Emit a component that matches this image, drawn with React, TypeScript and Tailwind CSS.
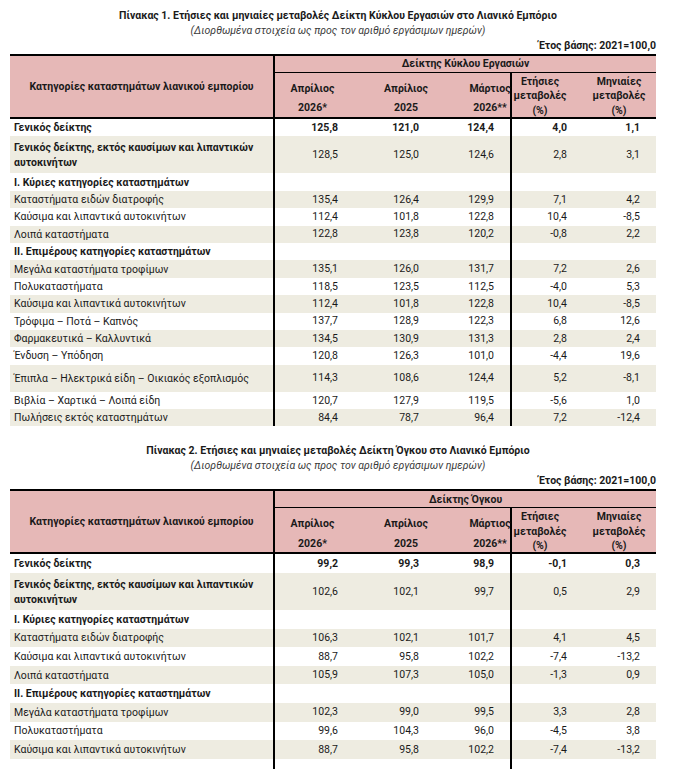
import React from 'react';

type Row = {
  label: string;
  v: string[];
  kind?: 'bold' | 'boldLabel' | 'section';
  size?: 'double' | 'tall' | 'empty';
};

const table1: Row[] = [
  { label: 'Γενικός δείκτης', v: ['125,8', '121,0', '124,4', '4,0', '1,1'], kind: 'bold' },
  { label: 'Γενικός δείκτης, εκτός καυσίμων και λιπαντικών αυτοκινήτων', v: ['128,5', '125,0', '124,6', '2,8', '3,1'], kind: 'boldLabel', size: 'double' },
  { label: 'I. Κύριες κατηγορίες καταστημάτων', v: ['', '', '', '', ''], kind: 'section' },
  { label: 'Καταστήματα ειδών διατροφής', v: ['135,4', '126,4', '129,9', '7,1', '4,2'] },
  { label: 'Καύσιμα και λιπαντικά αυτοκινήτων', v: ['112,4', '101,8', '122,8', '10,4', '-8,5'] },
  { label: 'Λοιπά καταστήματα', v: ['122,8', '123,8', '120,2', '-0,8', '2,2'] },
  { label: 'II. Επιμέρους κατηγορίες καταστημάτων', v: ['', '', '', '', ''], kind: 'section' },
  { label: 'Μεγάλα καταστήματα τροφίμων', v: ['135,1', '126,0', '131,7', '7,2', '2,6'] },
  { label: 'Πολυκαταστήματα', v: ['118,5', '123,5', '112,5', '-4,0', '5,3'] },
  { label: 'Καύσιμα και λιπαντικά αυτοκινήτων', v: ['112,4', '101,8', '122,8', '10,4', '-8,5'] },
  { label: 'Τρόφιμα – Ποτά – Καπνός', v: ['137,7', '128,9', '122,3', '6,8', '12,6'] },
  { label: 'Φαρμακευτικά – Καλλυντικά', v: ['134,5', '130,9', '131,3', '2,8', '2,4'] },
  { label: 'Ένδυση – Υπόδηση', v: ['120,8', '126,3', '101,0', '-4,4', '19,6'] },
  { label: 'Έπιπλα – Ηλεκτρικά είδη – Οικιακός εξοπλισμός', v: ['114,3', '108,6', '124,4', '5,2', '-8,1'], size: 'tall' },
  { label: 'Βιβλία – Χαρτικά – Λοιπά είδη', v: ['120,7', '127,9', '119,5', '-5,6', '1,0'] },
  { label: 'Πωλήσεις εκτός καταστημάτων', v: ['84,4', '78,7', '96,4', '7,2', '-12,4'] },
];

const table2: Row[] = [
  { label: 'Γενικός δείκτης', v: ['99,2', '99,3', '98,9', '-0,1', '0,3'], kind: 'bold' },
  { label: 'Γενικός δείκτης, εκτός καυσίμων και λιπαντικών αυτοκινήτων', v: ['102,6', '102,1', '99,7', '0,5', '2,9'], kind: 'boldLabel', size: 'double' },
  { label: 'I. Κύριες κατηγορίες καταστημάτων', v: ['', '', '', '', ''], kind: 'section' },
  { label: 'Καταστήματα ειδών διατροφής', v: ['106,3', '102,1', '101,7', '4,1', '4,5'] },
  { label: 'Καύσιμα και λιπαντικά αυτοκινήτων', v: ['88,7', '95,8', '102,2', '-7,4', '-13,2'] },
  { label: 'Λοιπά καταστήματα', v: ['105,9', '107,3', '105,0', '-1,3', '0,9'] },
  { label: 'II. Επιμέρους κατηγορίες καταστημάτων', v: ['', '', '', '', ''], kind: 'section' },
  { label: 'Μεγάλα καταστήματα τροφίμων', v: ['102,3', '99,0', '99,5', '3,3', '2,8'] },
  { label: 'Πολυκαταστήματα', v: ['99,6', '104,3', '96,0', '-4,5', '3,8'] },
  { label: 'Καύσιμα και λιπαντικά αυτοκινήτων', v: ['88,7', '95,8', '102,2', '-7,4', '-13,2'] },
  { label: '', v: ['', '', '', '', ''], size: 'empty' },
];

const cols = 'grid grid-cols-[265px_75px_112px_50px_70px_74px]';
const numPad = ['pr-[12px]', 'pr-[43px]', 'pr-[16px] border-r-2 border-black', 'pr-[15px]', 'pr-[16px]'];

function Header({ name }: { name: string }) {
  return (
    <div className={`${cols} bg-[#e6b8b7] border-t-2 border-b-2 border-black font-bold`}>
      <div className="row-span-2 border-r-2 border-black flex items-center justify-center">
        Κατηγορίες καταστημάτων λιανικού εμπορίου
      </div>
      <div className="col-span-5 h-[17px] border-b border-black flex items-center justify-center">{name}</div>
      <div className="h-[44px] flex flex-col items-center justify-between pt-[8px] pb-[1px]">
        <span>Απρίλιος</span>
        <span>2026*</span>
      </div>
      <div className="h-[44px] flex flex-col items-center justify-between pt-[8px] pb-[1px]">
        <span>Απρίλιος</span>
        <span>2025</span>
      </div>
      <div className="h-[44px] flex flex-col items-center justify-between pt-[8px] pb-[1px] pl-[8px] border-r-2 border-black">
        <span>Μάρτιος</span>
        <span>2026**</span>
      </div>
      <div className="h-[44px] flex flex-col items-center justify-center pt-[3px] pr-[14px] leading-[14.5px]">
        <span>Ετήσιες</span>
        <span>μεταβολές</span>
        <span>(%)</span>
      </div>
      <div className="h-[44px] flex flex-col items-center justify-center pt-[3px] leading-[14.5px]">
        <span>Μηνιαίες</span>
        <span>μεταβολές</span>
        <span>(%)</span>
      </div>
    </div>
  );
}

function Table({ title, sub, name, rows, rowH }: { title: string; sub: string; name: string; rows: Row[]; rowH: string }) {
  return (
    <div>
      <div className="w-[676px] text-center font-bold leading-[15px]">{title}</div>
      <div className="w-[676px] text-center italic text-[#3a3a3a] leading-[15px]">{sub}</div>
      <div className="ml-[10px] w-[646px] text-right font-bold leading-[15px] mb-[1px]">Έτος βάσης: 2021=100,0</div>
      <div className="ml-[10px] w-[646px]">
        <Header name={name} />
        {rows.map((r, i) => {
          const h = r.size === 'double' ? 'h-[37px]' : r.size === 'tall' ? 'h-[27px]' : rowH;
          const bg = i % 2 === 1 ? 'bg-[#eeece1]' : 'bg-white';
          const labelBold = r.kind ? 'font-bold' : '';
          const valBold = r.kind === 'bold' ? 'font-bold' : '';
          return (
            <div key={i} className={`${cols} ${bg} ${h}`}>
              <div className={`border-r-2 border-black pl-[4px] pr-[8px] flex items-center leading-[15px] ${labelBold}`}>
                {r.label}
              </div>
              {r.v.map((x, j) => (
                <div key={j} className={`flex items-center justify-end ${numPad[j]} ${valBold}`}>
                  {x}
                </div>
              ))}
            </div>
          );
        })}
      </div>
    </div>
  );
}

export default function App() {
  return (
    <div className="w-[680px] h-[769px] overflow-hidden bg-white text-[#1a1a1a] text-[10.5px] font-['Roboto',sans-serif] pt-[8px]">
      <Table
        title="Πίνακας 1. Ετήσιες και μηνιαίες μεταβολές Δείκτη Κύκλου Εργασιών στο Λιανικό Εμπόριο"
        sub="(Διορθωμένα στοιχεία ως προς τον αριθμό εργάσιμων ημερών)"
        name="Δείκτης Κύκλου Εργασιών"
        rows={table1}
        rowH="h-[17.4px]"
      />
      <div className="h-[17px]" />
      <Table
        title="Πίνακας 2. Ετήσιες και μηνιαίες μεταβολές Δείκτη Όγκου στο Λιανικό Εμπόριο"
        sub="(Διορθωμένα στοιχεία ως προς τον αριθμό εργάσιμων ημερών)"
        name="Δείκτης Όγκου"
        rows={table2}
        rowH="h-[18.6px]"
      />
    </div>
  );
}
